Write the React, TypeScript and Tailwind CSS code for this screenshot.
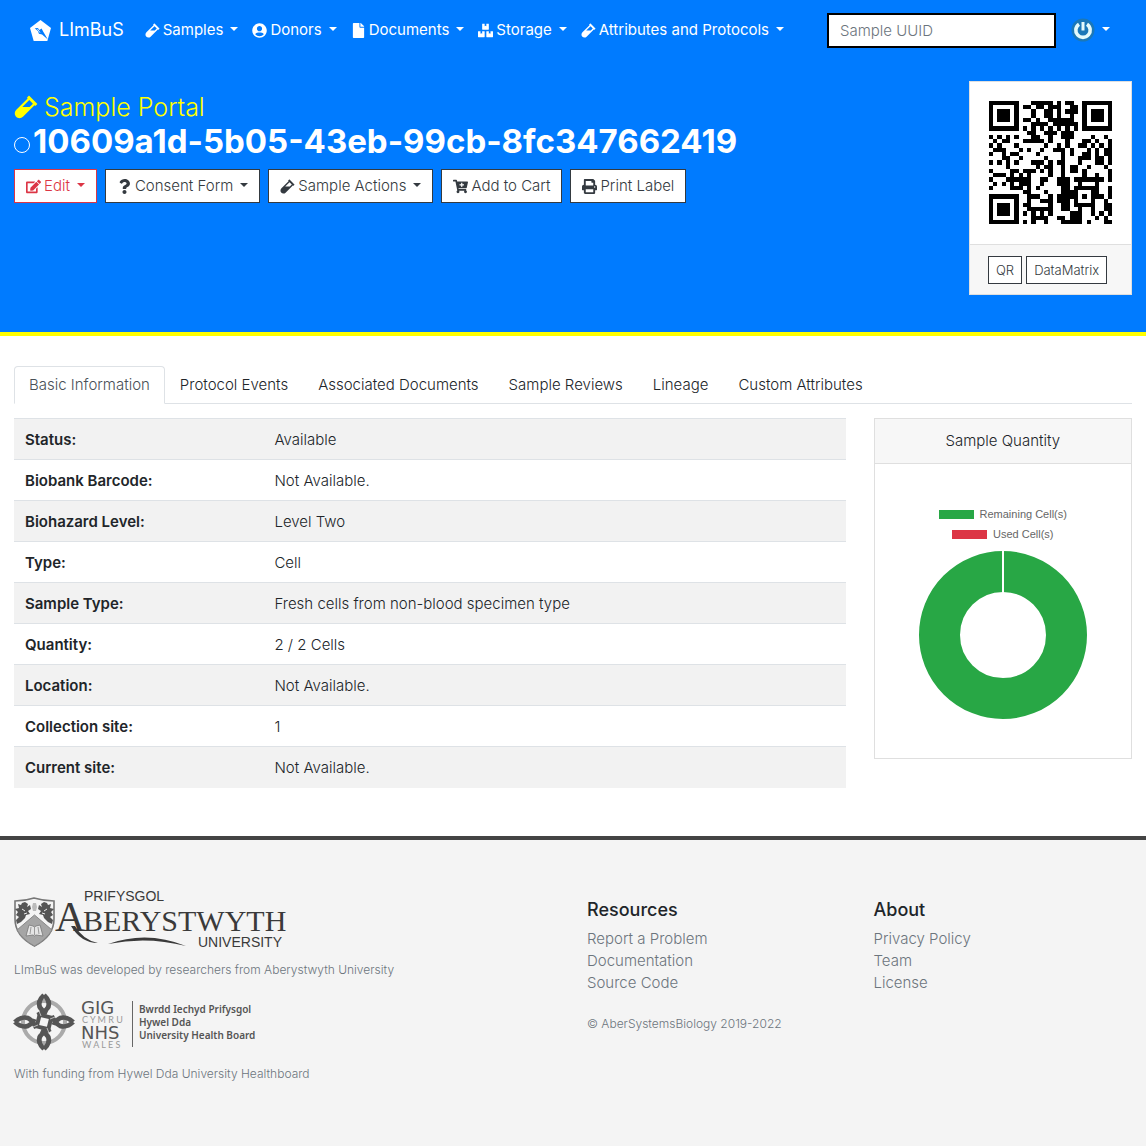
import React from "react";
import {
  FaVial,
  FaUserCircle,
  FaFile,
  FaBoxes,
  FaEdit,
  FaQuestion,
  FaCartPlus,
  FaPrint,
} from "react-icons/fa";

const UUID = "10609a1d-5b05-43eb-99cb-8fc347662419";

/* ---------- QR symbol: version 3, level M, byte mode, mask 0 ---------- */

const SIZE = 29;
const DATA_WORDS = 44;
const EC_WORDS = 26;
const FORMAT = 0x5412;

function gfMul(a: number, b: number) {
  let r = 0;
  for (let i = 7; i >= 0; i--) {
    r = (r << 1) ^ ((r >>> 7) * 0x11d);
    r ^= ((b >>> i) & 1) * a;
  }
  return r & 255;
}

function codewords(text: string): number[] {
  const bits: number[] = [];
  const push = (v: number, n: number) => {
    for (let i = n - 1; i >= 0; i--) bits.push((v >>> i) & 1);
  };
  push(4, 4);
  push(text.length, 8);
  for (const c of text) push(c.charCodeAt(0), 8);
  push(0, Math.min(4, DATA_WORDS * 8 - bits.length));
  while (bits.length % 8) bits.push(0);
  const data: number[] = [];
  for (let i = 0; i < bits.length; i += 8)
    data.push(parseInt(bits.slice(i, i + 8).join(""), 2));
  for (let pad = 0xec; data.length < DATA_WORDS; pad ^= 0xec ^ 0x11) data.push(pad);

  const gen: number[] = new Array(EC_WORDS).fill(0);
  gen[EC_WORDS - 1] = 1;
  let root = 1;
  for (let i = 0; i < EC_WORDS; i++) {
    for (let j = 0; j < EC_WORDS; j++) {
      gen[j] = gfMul(gen[j], root);
      if (j + 1 < EC_WORDS) gen[j] ^= gen[j + 1];
    }
    root = gfMul(root, 2);
  }
  const rem: number[] = new Array(EC_WORDS).fill(0);
  for (const b of data) {
    const f = b ^ (rem.shift() as number);
    rem.push(0);
    gen.forEach((g, i) => (rem[i] ^= gfMul(g, f)));
  }
  return data.concat(rem);
}

function qrMatrix(text: string): boolean[][] {
  const m = Array.from({ length: SIZE }, () => new Array<boolean>(SIZE).fill(false));
  const fixed = Array.from({ length: SIZE }, () => new Array<boolean>(SIZE).fill(false));
  const set = (x: number, y: number, v: boolean) => {
    if (x < 0 || y < 0 || x >= SIZE || y >= SIZE) return;
    m[y][x] = v;
    fixed[y][x] = true;
  };
  for (let i = 0; i < SIZE; i++) {
    set(6, i, i % 2 === 0);
    set(i, 6, i % 2 === 0);
  }
  for (const [cx, cy] of [[3, 3], [SIZE - 4, 3], [3, SIZE - 4]])
    for (let dy = -4; dy <= 4; dy++)
      for (let dx = -4; dx <= 4; dx++) {
        const d = Math.max(Math.abs(dx), Math.abs(dy));
        set(cx + dx, cy + dy, d !== 2 && d !== 4);
      }
  for (let dy = -2; dy <= 2; dy++)
    for (let dx = -2; dx <= 2; dx++)
      set(22 + dx, 22 + dy, Math.max(Math.abs(dx), Math.abs(dy)) !== 1);

  const bit = (i: number) => ((FORMAT >>> i) & 1) === 1;
  for (let i = 0; i <= 5; i++) set(8, i, bit(i));
  set(8, 7, bit(6));
  set(8, 8, bit(7));
  set(7, 8, bit(8));
  for (let i = 9; i < 15; i++) set(14 - i, 8, bit(i));
  for (let i = 0; i < 8; i++) set(SIZE - 1 - i, 8, bit(i));
  for (let i = 8; i < 15; i++) set(8, SIZE - 15 + i, bit(i));
  set(8, SIZE - 8, true);

  const words = codewords(text);
  let k = 0;
  for (let right = SIZE - 1; right >= 1; right -= 2) {
    if (right === 6) right = 5;
    for (let v = 0; v < SIZE; v++)
      for (let j = 0; j < 2; j++) {
        const x = right - j;
        const y = ((right + 1) & 2) === 0 ? SIZE - 1 - v : v;
        if (fixed[y][x]) continue;
        const on = k < words.length * 8 && ((words[k >>> 3] >>> (7 - (k & 7))) & 1) === 1;
        m[y][x] = on !== ((x + y) % 2 === 0);
        k++;
      }
  }
  return m;
}

function QrCode({ text }: { text: string }) {
  const d = qrMatrix(text)
    .map((row, y) => row.map((on, x) => (on ? `M${x} ${y}h1v1h-1z` : "")).join(""))
    .join("");
  return (
    <svg viewBox="0 0 29 29" className="w-full" role="img" aria-label="QR code" shapeRendering="crispEdges">
      <path d={d} fill="#000" />
    </svg>
  );
}

/* ---------- Small parts ---------- */

function Caret() {
  return (
    <span className="mb-0.5 ml-[7px] inline-block border-x-4 border-t-4 border-x-transparent border-t-current" />
  );
}

function BrandMark() {
  return (
    <svg viewBox="0 0 20 20" className="size-[21px]" aria-hidden="true">
      <path d="M10 0 20 7.500 16.500 20H3.500L0 7.500z" fill="#fff" />
      <path d="M4.500 7.800 7.500 7.500l1.500 2 2-1.500 1.800 3.500L17 18.500l-5.500-4.700-3-.6-1-2.700z" fill="#007bff" />
      <path d="M7 8.500l2.500 3.500" stroke="#fff" strokeWidth=".8" />
    </svg>
  );
}

function Avatar() {
  return (
    <svg viewBox="0 0 24 24" className="size-6" aria-hidden="true">
      <circle cx="12" cy="12" r="11.500" fill="#1b78b8" />
      <path d="M8 6.200a7.200 7.200 0 1 0 8 0" fill="none" stroke="#e4fafc" strokeWidth="3.600" />
      <path d="M12 4v8.500" stroke="#e4fafc" strokeWidth="3" />
    </svg>
  );
}

const iconBox = "mr-[3px] [&>svg]:h-[15px] [&>svg]:w-auto";

const navItems = [
  { label: "Samples", icon: <FaVial /> },
  { label: "Donors", icon: <FaUserCircle /> },
  { label: "Documents", icon: <FaFile /> },
  { label: "Storage", icon: <FaBoxes /> },
  { label: "Attributes and Protocols", icon: <FaVial /> },
];

const actions = [
  { label: "Edit", icon: <FaEdit />, menu: true, danger: true },
  { label: "Consent Form", icon: <FaQuestion />, menu: true },
  { label: "Sample Actions", icon: <FaVial />, menu: true },
  { label: "Add to Cart", icon: <FaCartPlus /> },
  { label: "Print Label", icon: <FaPrint /> },
];

const tabs = [
  "Basic Information",
  "Protocol Events",
  "Associated Documents",
  "Sample Reviews",
  "Lineage",
  "Custom Attributes",
];

const rows = [
  ["Status:", "Available"],
  ["Biobank Barcode:", "Not Available."],
  ["Biohazard Level:", "Level Two"],
  ["Type:", "Cell"],
  ["Sample Type:", "Fresh cells from non-blood specimen type"],
  ["Quantity:", "2 / 2 Cells"],
  ["Location:", "Not Available."],
  ["Collection site:", "1"],
  ["Current site:", "Not Available."],
];

function AberystwythLogo() {
  return (
    <svg viewBox="0 0 274 60" className="w-[274px] overflow-visible font-normal" role="img" aria-label="Prifysgol Aberystwyth University">
      <path d="M1 11Q11 11 20 8Q30 11 40 11V29Q40 46 20.500 56Q1 46 1 29z" fill="#f4f4f4" stroke="#777" strokeWidth="1.600" />
      <g fill="#555">
        <path d="M4 14l3 1 1-2 3-1 3 2-1 3 3-2 1 4-3 2 2 3-4 1-1 3-4 4-4 2-1-4 3-3-3-2 2-3-3-3 4-1z" />
        <path d="M37 14l-3 1-1-2-3-1-3 2 1 3-3-2-1 4 3 2-2 3 4 1 1 3 4 4 4 2 1-4-3-3 3-2-2-3 3-3-4-1z" />
        <path d="M19 13h3l1 4-1 4h-3l-1-4z" fill="#bbb" />
      </g>
      <path d="M8 19l3 2M33 19l-3 2M10 24l3-1M31 24l-3-1" stroke="#eee" />
      <path d="M20.500 25 38 40Q32 50 20.500 56Q9 50 3 40z" fill="#a5a5a5" stroke="#888" />
      <path d="M12 46l3-11 4 1 1.500 1 1.500-1 4-1 3 11-7-1-1.500 1-1.500-1z" fill="#e4e4e4" stroke="#777" strokeWidth=".8" />
      <path d="M17 37l-1 7M20.500 37v8M24 37l1 7" stroke="#888" strokeWidth=".8" />
      <g fill="#3a3a3a">
        <text x="70" y="11" fontFamily="Liberation Sans" fontSize="14">PRIFYSGOL</text>
        <text x="41" y="41" fontFamily="Liberation Serif" fontSize="42">A</text>
        <text x="69" y="41" fontFamily="Liberation Serif" fontSize="30">BERYSTWYTH</text>
        <text x="184" y="57" fontFamily="Liberation Sans" fontSize="14">UNIVERSITY</text>
        <path d="M61 36Q69 50 84 53Q67 53 57 36z" />
        <path d="M94 54Q133 40 172 56Q133 46 94 54z" />
      </g>
    </svg>
  );
}

function Petal({ turn }: { turn: number }) {
  return (
    <g transform={`rotate(${turn} 31 28)`}>
      <path
        d="M31 1Q25 7 27 13Q29 17 34 19M31 1Q37 7 35 13Q33 17 25 21"
        fill="none"
        stroke="#555"
        strokeWidth="4.500"
        strokeLinejoin="round"
      />
    </g>
  );
}

function HealthBoardLogo() {
  return (
    <svg viewBox="0 0 250 58" className="w-[250px] overflow-visible font-normal" role="img" aria-label="Hywel Dda University Health Board">
      <g transform="translate(-1 0)">
        <circle cx="31" cy="28" r="21" fill="none" stroke="#aaa" strokeWidth="4" />
        <g transform="translate(31 28) scale(1.08 1) translate(-31 -28)">
          <Petal turn={0} />
          <Petal turn={90} />
          <Petal turn={180} />
          <Petal turn={270} />
        </g>
        <rect
          x="25"
          y="22"
          width="12"
          height="12"
          transform="rotate(14 31 28)"
          fill="#f4f4f4"
          stroke="#555"
          strokeWidth="4"
        />
        <path d="M26 17l2 5M42 23l-5 2M36 39l-2-5M20 33l5-2" stroke="#bbb" />
      </g>
      <g fontFamily="DejaVu Sans" fill="#555" fontSize="18">
        <text x="67" y="20">GIG</text>
        <text x="67" y="45">NHS</text>
      </g>
      <g fontFamily="Lato" fill="#999" fontSize="9">
        <text x="68" y="29">C Y M R U</text>
        <text x="68" y="54">W A L E S</text>
      </g>
      <path d="M118.500 7v46" stroke="#666" />
      <g fontFamily="Noto Sans" fontSize="10" fontWeight="600" fill="#555">
        <text x="125" y="19">Bwrdd Iechyd Prifysgol</text>
        <text x="125" y="32">Hywel Dda</text>
        <text x="125" y="45">University Health Board</text>
      </g>
    </svg>
  );
}

function FooterLinks({ title, links }: { title: string; links: string[] }) {
  return (
    <>
      <h5 className="mb-[6px] text-lg leading-6 font-medium text-[#212529]">{title}</h5>
      <ul className="text-[15px] leading-[22px]">
        {links.map((l) => (
          <li key={l}>
            <a href="#">{l}</a>
          </li>
        ))}
      </ul>
    </>
  );
}

export default function App() {
  return (
    <div className="flex min-h-screen flex-col bg-white font-['Inter',sans-serif] text-[15px] leading-[22px] font-light text-[#212529]">
      <header className="border-b-4 border-[#ffff00] bg-[#007bff]">
        <nav className="flex h-[60px] items-center pr-[29px] pl-[30px] font-normal text-white">
          <a href="#" className="mr-[14px] flex items-center gap-2 text-lg">
            <BrandMark />
            LImBuS
          </a>
          <ul className="flex">
            {navItems.map((n) => (
              <li key={n.label}>
                <button type="button" className="flex items-center px-[7px] whitespace-nowrap">
                  <span className={iconBox}>{n.icon}</span>
                  {n.label}
                  <Caret />
                </button>
              </li>
            ))}
          </ul>
          <input
            type="text"
            aria-label="Sample UUID"
            placeholder="Sample UUID"
            className="ml-auto h-[35px] w-[229px] border-2 border-black bg-white px-[11px] font-light placeholder:text-[#6c757d]"
          />
          <button type="button" aria-label="Account" className="ml-[15px] flex items-center pr-[7px]">
            <Avatar />
            <Caret />
          </button>
        </nav>

        <div className="flex items-start justify-between px-[14px] pt-[21px] pb-[37px]">
          <div className="pt-3">
            <h2 className="flex items-center gap-[6px] text-[25px] leading-7 text-[#ffff00]">
              <FaVial className="size-6" />
              Sample Portal
            </h2>
            <h1 className="flex items-center gap-[3px] text-[33px] leading-10 font-bold text-white">
              <span className="mt-2 size-4 rounded-full border border-white" />
              {UUID}
            </h1>
            <div className="mt-2 flex gap-2">
              {actions.map((a) => (
                <button
                  key={a.label}
                  type="button"
                  className={`flex h-[34px] items-center border bg-white px-[11px] whitespace-nowrap ${
                    a.danger ? "border-[#dc3545] text-[#dc3545]" : "border-[#343a40] text-[#343a40]"
                  }`}
                >
                  <span className={iconBox}>{a.icon}</span>
                  {a.label}
                  {a.menu && <Caret />}
                </button>
              ))}
            </div>
          </div>
          <div className="w-[163px] border border-[#dfdfdf] bg-white">
            <div className="px-[19px] pt-[19px] pb-5">
              <QrCode text={UUID} />
            </div>
            <div className="flex gap-1 border-t border-[#dfdfdf] bg-[#f7f7f7] px-[18px] pt-[11px] pb-[10px] text-[13px] leading-5 text-[#343a40]">
              <button type="button" className="border border-[#343a40] bg-white px-[7px] py-[3px]">
                QR
              </button>
              <button type="button" className="border border-[#343a40] bg-white px-[7px] py-[3px]">
                DataMatrix
              </button>
            </div>
          </div>
        </div>
      </header>

      <main className="px-[14px] pt-[30px] pb-12">
        <div role="tablist" className="flex border-b border-[#dee2e6]">
          {tabs.map((t, i) => (
            <button
              key={t}
              type="button"
              role="tab"
              aria-selected={i === 0}
              className={`-mb-px h-[38px] rounded-t border px-[14px] ${
                i === 0
                  ? "border-[#dee2e6] border-b-white bg-white text-[#495057]"
                  : "border-transparent"
              }`}
            >
              {t}
            </button>
          ))}
        </div>

        <div className="mt-[14px] -mr-[14px] -ml-[14px] grid grid-cols-4 items-start">
          <div className="col-span-3 px-[14px]">
            <table className="w-full table-fixed border-collapse">
              <tbody>
                {rows.map(([k, v]) => (
                  <tr key={k} className="h-[41px] border-t border-[#dee2e6] odd:bg-[#f2f2f2]">
                    <th scope="row" className="w-[30%] px-[11px] pt-0.5 text-left font-semibold">
                      {k}
                    </th>
                    <td className="px-[11px] pt-0.5">{v}</td>
                  </tr>
                ))}
              </tbody>
            </table>
          </div>
          <div className="px-[14px]">
            <section className="border border-[#dfdfdf]">
              <h3 className="border-b border-[#dfdfdf] bg-[#f7f7f7] py-[11px] text-center">
                Sample Quantity
              </h3>
              <div className="flex flex-col items-center pt-10 pb-[38px] font-['Liberation_Sans',sans-serif] text-[11px] leading-5 font-normal text-[#666]">
                <div className="flex items-center gap-[6px]">
                  <span className="h-[9px] w-[35px] bg-[#28a745]" />
                  Remaining Cell(s)
                </div>
                <div className="flex items-center gap-[6px]">
                  <span className="h-[9px] w-[35px] bg-[#dc3545]" />
                  Used Cell(s)
                </div>
                <svg viewBox="0 0 170 170" className="mt-[6px] w-[170px]" role="img" aria-label="Remaining 2, used 0">
                  <circle cx="85" cy="85" r="63.500" fill="none" stroke="#28a745" strokeWidth="41" />
                  <path d="M85 0v43" stroke="#fff" strokeWidth="2" />
                </svg>
              </div>
            </section>
          </div>
        </div>
      </main>

      <footer className="grid grow grid-cols-4 border-t-4 border-[#444] bg-[#f4f4f4] pt-[50px] text-[#6c757d]">
        <div className="col-span-2 px-[14px] text-[12px] leading-5">
          <AberystwythLogo />
          <p className="mt-[10px]">LImBuS was developed by researchers from Aberystwyth University</p>
          <div className="mt-[14px]">
            <HealthBoardLogo />
          </div>
          <p className="mt-3">With funding from Hywel Dda University Healthboard</p>
        </div>
        <div className="px-[14px] pt-2">
          <FooterLinks title="Resources" links={["Report a Problem", "Documentation", "Source Code"]} />
          <p className="mt-5 text-[12px] leading-5">© AberSystemsBiology 2019-2022</p>
        </div>
        <div className="px-[14px] pt-2">
          <FooterLinks title="About" links={["Privacy Policy", "Team", "License"]} />
        </div>
      </footer>
    </div>
  );
}
